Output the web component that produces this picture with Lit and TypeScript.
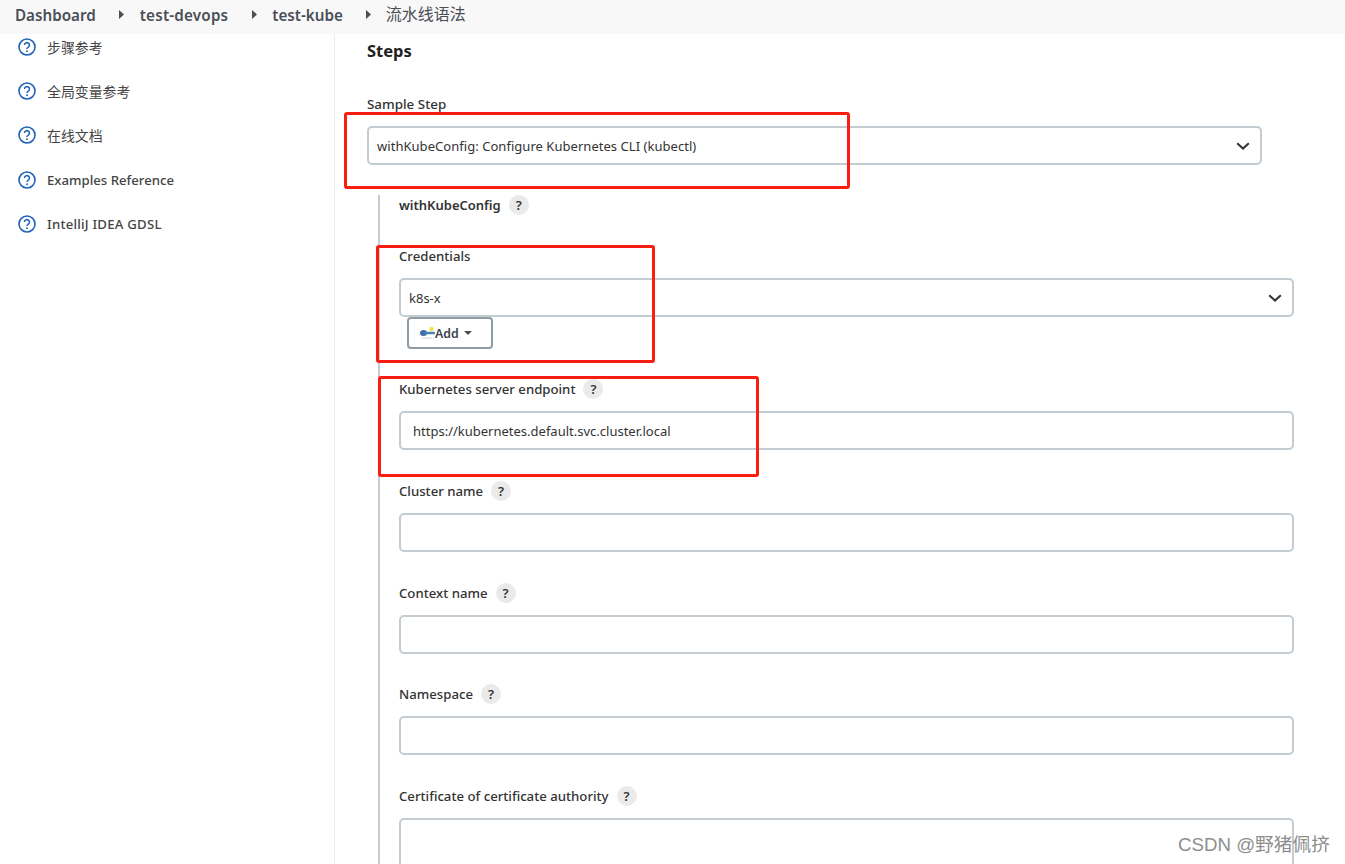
import { LitElement, html, css, svg } from "lit";
import { customElement } from "lit/decorators.js";

const chevron = html`<svg class="chev" width="14" height="8" viewBox="0 0 14 8"><path d="M1.2 1.2 7 6.6l5.8-5.4" fill="none" stroke="#333" stroke-width="2"/></svg>`;
const tri = html`<svg class="tri" width="5" height="9" viewBox="0 0 5 9"><path d="M0 0l5 4.5L0 9z" fill="#4a4f57"/></svg>`;
const helpIcon = html`<svg class="qi" width="18" height="18" viewBox="0 0 18 18"><circle cx="9" cy="9" r="8" fill="none" stroke="#1f62b8" stroke-width="1.6"/><path d="M6.5 7a2.5 2.4 0 1 1 3.8 2.1c-.9.5-1.3 1-1.3 2" fill="none" stroke="#1f62b8" stroke-width="1.5"/><circle cx="9" cy="13.2" r=".95" fill="#1f62b8"/></svg>`;
const keyIcon = svg`<svg class="key" width="15" height="14" viewBox="0 0 15 14"><ellipse cx="7" cy="12" rx="6" ry="1" fill="#e4e6e8"/><circle cx="11.5" cy="3" r="2.2" fill="#f2e14c"/><ellipse cx="3.5" cy="7" rx="3.5" ry="3" fill="#3f6fa8"/><rect x="5" y="5.8" width="10" height="2.4" rx=".8" fill="#4e7fb5"/></svg>`;

@customElement("app-root")
export class AppRoot extends LitElement {
  static styles = css`
    :host { display: block; width: 1345px; height: 864px; overflow: hidden; position: relative; background: #fff; color: #333; font-family: "Noto Sans", "Noto Sans CJK SC", sans-serif; font-size: 13px; }
    .crumbs { box-sizing: border-box; height: 34px; background: #f8f8f8; display: flex; align-items: center; padding: 0 0 5px 15px; font-weight: 600; font-size: 15.2px; color: #4a4f57; }
    .crumbs .tri { margin: 0 15.5px 0 23.5px; }
    .crumbs .sp { letter-spacing: .2px; }
    .crumbs .cjk { font-weight: 400; font-size: 16px; margin-bottom: 3px; margin-left: -1px; font-family: "Noto Sans CJK SC", sans-serif; }
    .body { display: flex; height: 830px; }
    .side { width: 334px; border-right: 1px solid #eee; flex: none; display: flex; flex-direction: column; gap: 18.2px; }
    .side-item { height: 26px; display: flex; align-items: center; padding-left: 18px; gap: 11px; color: #444; font-size: 13.2px; font-weight: 500; }
    .side-item .cjk { font-size: 13.9px; font-weight: 400; font-family: "Noto Sans CJK SC", sans-serif; }
    .side-item .wide { letter-spacing: .22px; }
    .main { flex: 1; padding: 6px 51px 0 32px; min-width: 0; }
    h2 { margin: 0; font-size: 16.5px; font-weight: 700; line-height: 22px; color: #222; }
    .sample-label { margin-top: 32px; line-height: 20px; font-size: 13.4px; font-weight: 500; }
    .control { box-sizing: border-box; height: 39px; border: 2px solid #c3ccd1; border-radius: 5px; display: flex; align-items: center; justify-content: space-between; padding: 0 10px 0 8px; background: #fff; }
    .sample-select { width: 895px; margin-top: 12px; letter-spacing: .04px; }
    .nest { margin-left: 11px; margin-top: 30px; border-left: 2px solid #c3ccd1; padding-left: 19px; height: 700px; }
    .row { display: flex; align-items: center; height: 20px; gap: 8px; font-size: 13.2px; font-weight: 500; }
    .row.bold { font-weight: 600; font-size: 13px; }
    .help { width: 20px; height: 20px; border-radius: 50%; background: #eaeaea; font-weight: 600; font-size: 13px; display: flex; align-items: center; justify-content: center; color: #333; }
    .field { margin-bottom: 30.75px; }
    .gap { margin-top: 12px; }
    .text { padding-left: 12px; }
    .first { margin-top: 31px; }
    .cred { margin-bottom: 30px; }
    .add { box-sizing: border-box; margin-left: 8px; width: 86px; height: 32px; border: 2px solid #8f9ca5; border-radius: 4px; display: flex; align-items: center; padding-left: 11px; font-weight: 600; font-size: 12.3px; color: #3c4249; }
    .caret { width: 0; height: 0; border: 4px solid transparent; border-top: 4px solid #4a4f57; border-bottom: 0; margin-left: 5px; }
    .ta { height: 80px; }
    .mark { position: absolute; box-sizing: border-box; border: 3px solid #fb1c12; border-radius: 3px; pointer-events: none; }
    .m1 { left: 344px; top: 112px; width: 506px; height: 77px; }
    .m2 { left: 376px; top: 245px; width: 279px; height: 118px; }
    .m3 { left: 378px; top: 376px; width: 381px; height: 101px; }
    .wm { position: absolute; left: 1178px; top: 832px; font-size: 18.7px; line-height: 26px; color: #8e8e8e; font-family: "Liberation Sans", "Noto Sans CJK SC", sans-serif; white-space: nowrap; }
  `;

  private field(label: string, value = "", cls = "") {
    return html`<div class="field">
      <div class="row"><span>${label}</span><span class="help">?</span></div>
      <div class="control gap text ${cls}">${value}</div>
    </div>`;
  }

  render() {
    const side = [["步骤参考", "cjk"], ["全局变量参考", "cjk"], ["在线文档", "cjk"], ["Examples Reference", ""], ["IntelliJ IDEA GDSL", "wide"]];
    return html`
      <nav class="crumbs">
        <span>Dashboard</span>${tri}<span class="sp">test-devops</span>${tri}<span>test-kube</span>${tri}<span class="cjk">流水线语法</span>
      </nav>
      <div class="body">
        <aside class="side">
          ${side.map(([t, c]) => html`<div class="side-item">${helpIcon}<span class=${c}>${t}</span></div>`)}
        </aside>
        <main class="main">
          <h2>Steps</h2>
          <div class="sample-label">Sample Step</div>
          <div class="control sample-select"><span>withKubeConfig: Configure Kubernetes CLI (kubectl)</span>${chevron}</div>
          <div class="nest">
            <div class="row bold"><span>withKubeConfig</span><span class="help">?</span></div>
            <div class="first cred">
              <div class="row"><span>Credentials</span></div>
              <div class="control gap"><span>k8s-x</span>${chevron}</div>
              <div class="add">${keyIcon}<span>Add</span><span class="caret"></span></div>
            </div>
            ${this.field("Kubernetes server endpoint", "https://kubernetes.default.svc.cluster.local")}
            ${this.field("Cluster name")}
            ${this.field("Context name")}
            ${this.field("Namespace")}
            ${this.field("Certificate of certificate authority", "", "ta")}
          </div>
        </main>
      </div>
      <div class="mark m1"></div>
      <div class="mark m2"></div>
      <div class="mark m3"></div>
      <div class="wm">CSDN @野猪佩挤</div>
    `;
  }
}
